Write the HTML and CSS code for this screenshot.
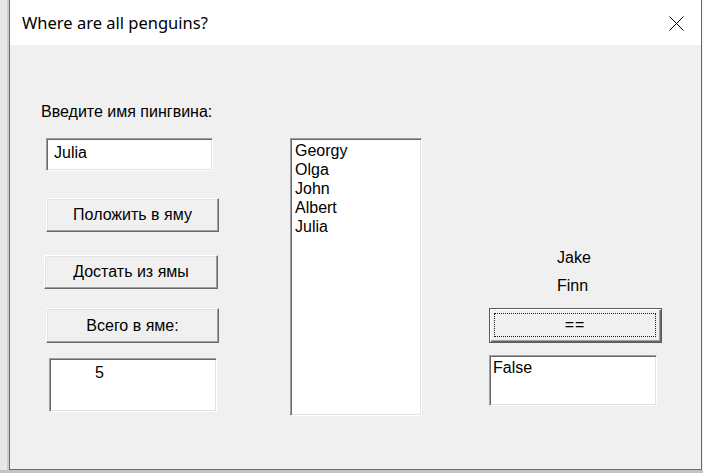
FILE: index.html
```html
<!DOCTYPE html>
<html lang="ru">
<head>
<meta charset="utf-8">
<title>Where are all penguins?</title>
<link rel="stylesheet" href="styles.css">
</head>
<body>
<div class="window">
  <div class="titlebar">
    <span class="title">Where are all penguins?</span>
    <svg class="close" width="15" height="15" viewBox="0 0 15 15">
      <path d="M0.5 0.5 L14.5 14.5 M14.5 0.5 L0.5 14.5" stroke="#000" stroke-width="1" fill="none"/>
    </svg>
  </div>
  <div class="client">
    <div class="col-left">
      <div class="label name-label">Введите имя пингвина:</div>
      <div class="textbox tb-name">Julia</div>
      <div class="button btn-put">Положить в яму</div>
      <div class="button btn-get">Достать из ямы</div>
      <div class="button btn-count">Всего в яме:</div>
      <div class="textbox tb-count">5</div>
    </div>
    <div class="listbox">
      <div class="item">Georgy</div>
      <div class="item">Olga</div>
      <div class="item">John</div>
      <div class="item">Albert</div>
      <div class="item">Julia</div>
    </div>
    <div class="col-right">
      <div class="label jake">Jake</div>
      <div class="label finn">Finn</div>
      <div class="button default btn-eq"><span class="focus">==</span></div>
      <div class="textbox tb-result">False</div>
    </div>
  </div>
</div>
</body>
</html>
```

FILE: styles.css
```css
* { box-sizing: border-box; }

html, body {
  margin: 0;
  padding: 0;
}

body {
  width: 703px;
  height: 473px;
  overflow: hidden;
  background:
    linear-gradient(to bottom, rgba(0,0,0,0) 470px, #c3c3c3 470px),
    linear-gradient(to right, #e7e7ea 0, #e7e7ea 7px, #cdcdd1 7px, #cdcdd1 9px, #efefef 9px);
  font-family: "Liberation Sans", Arial, sans-serif;
  font-size: 16px;
  line-height: 18px;
  color: #000;
}

.window {
  margin-left: 9px;
  width: 693px;
  height: 470px;
  border: 1px solid #6a6a6a;
  border-top: none;
  display: flex;
  flex-direction: column;
  background: #f0f0f0;
}

.titlebar {
  height: 45px;
  flex: 0 0 45px;
  background: #ffffff;
  display: flex;
  align-items: center;
  justify-content: space-between;
  padding-left: 12px;
  padding-right: 17px;
}

.title {
  font-family: "Noto Sans", "Open Sans", sans-serif;
  font-size: 16.5px;
  color: #000;
  margin-top: 1px;
}

.close {
  display: block;
  margin-top: 1px;
}

.client {
  flex: 1;
  display: flex;
  align-items: flex-start;
  background: #f0f0f0;
}

.col-left {
  width: 210px;
  display: flex;
  flex-direction: column;
  align-items: flex-start;
}

.label {
  white-space: nowrap;
}

.name-label { margin: 58px 0 0 31px; }

.textbox {
  background: #fff;
  border-top: 1px solid #a0a0a0;
  border-left: 1px solid #a0a0a0;
  border-bottom: 1px solid #ffffff;
  border-right: 1px solid #ffffff;
  box-shadow: inset 1px 1px 0 #696969, inset -1px -1px 0 #e3e3e3;
  padding: 4px 5px 0 7px;
  white-space: nowrap;
}

.tb-name {
  margin: 17px 0 0 36px;
  width: 167px;
  height: 33px;
  padding: 5px 0 0 7px;
}

.tb-count {
  margin: 15px 0 0 39px;
  width: 168px;
  height: 54px;
  padding: 5px 0 0 45px;
}

.button {
  background: #f0f0f0;
  border-top: 1px solid #ffffff;
  border-left: 1px solid #ffffff;
  border-bottom: 1px solid #696969;
  border-right: 1px solid #696969;
  box-shadow: inset -1px -1px 0 #a0a0a0, inset 1px 1px 0 #e3e3e3;
  display: flex;
  align-items: center;
  justify-content: center;
  white-space: nowrap;
}

.btn-put {
  margin: 27px 0 0 36px;
  width: 173px;
  height: 34px;
}

.btn-get {
  margin: 23px 0 0 34px;
  width: 174px;
  height: 34px;
}

.btn-count {
  margin: 19px 0 0 36px;
  width: 173px;
  height: 35px;
}

.listbox {
  margin: 93px 0 0 70px;
  width: 132px;
  height: 278px;
  background: #fff;
  border-top: 1px solid #a0a0a0;
  border-left: 1px solid #a0a0a0;
  border-bottom: 1px solid #ffffff;
  border-right: 1px solid #ffffff;
  box-shadow: inset 1px 1px 0 #696969, inset -1px -1px 0 #e3e3e3;
  padding: 2px 0 0 4px;
}

.item {
  line-height: 19px;
  height: 19px;
  white-space: nowrap;
}

.col-right {
  margin-left: 67px;
  width: 173px;
  display: flex;
  flex-direction: column;
  align-items: flex-start;
}

.jake { margin: 204px 0 0 68px; }
.finn { margin: 10px 0 0 68px; }

.btn-eq {
  margin-top: 13px;
  width: 173px;
  height: 35px;
}

.button.default {
  border: 1px solid #5a5a5a;
  box-shadow: inset 1px 1px 0 #ffffff, inset -1px -1px 0 #696969, inset -2px -2px 0 #a0a0a0;
  padding: 4px 5px 5px 4px;
  align-items: stretch;
}

.focus {
  flex: 1;
  border: 1px dotted #1a1a1a;
  display: flex;
  align-items: center;
  justify-content: center;
  letter-spacing: 1px;
}

.tb-result {
  margin-top: 12px;
  width: 168px;
  height: 51px;
  padding: 3px 0 0 3px;
}
```
